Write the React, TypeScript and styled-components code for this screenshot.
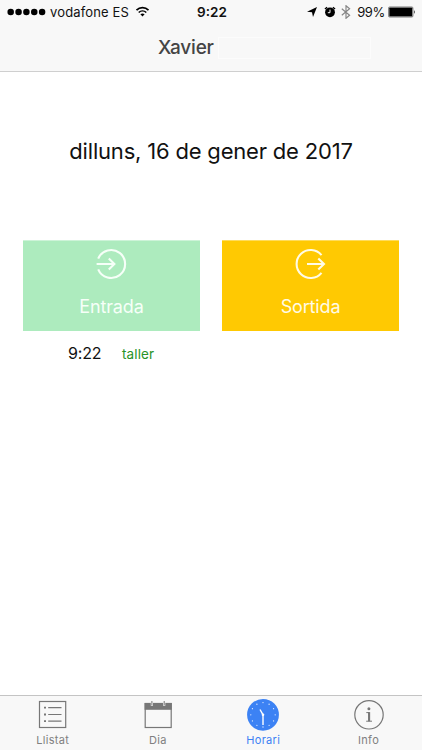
import React from "react";
import styled, { createGlobalStyle } from "styled-components";

const GlobalStyle = createGlobalStyle`
  * { box-sizing: border-box; }
  body {
    margin: 0;
    background: #fff;
    color: #111;
    font-family: Inter, "Liberation Sans", sans-serif;
  }
  svg { display: block; flex: none; }
`;

const Screen = styled.div`
  display: flex;
  flex-direction: column;
  width: 422px;
  height: 750px;
  overflow: hidden;
  white-space: nowrap;
`;

const Header = styled.header`
  height: 72px;
  flex: none;
  background: #f8f8f8;
  border-bottom: 1px solid #cfcfcf;
`;

const StatusBar = styled.div`
  display: grid;
  grid-template-columns: 1fr auto 1fr;
  align-items: center;
  height: 24px;
  padding: 0 6px 0 7px;
  font-size: 13px;
  line-height: 24px;
`;

const StatusGroup = styled.div<{ $end?: boolean }>`
  display: flex;
  align-items: center;
  justify-content: ${(p) => (p.$end ? "flex-end" : "flex-start")};
`;

const Carrier = styled.span`
  margin: 0 6px 0 4px;
  letter-spacing: 0.15px;
`;

const Clock = styled.span`
  padding-left: 1px;
  font-weight: 600;
  font-size: 13.5px;
`;

const Percent = styled.span`
  margin: 0 3px 0 6px;
  letter-spacing: -0.35px;
`;

const IconSlot = styled.span<{ $gap: number }>`
  margin-left: ${(p) => p.$gap}px;
`;

const TitleRow = styled.div`
  display: flex;
  align-items: center;
  height: 47px;
  padding-left: 158px;
`;

const Title = styled.h1`
  margin: 0;
  width: 60px;
  font-size: 19px;
  font-weight: 500;
  line-height: 47px;
  letter-spacing: -0.2px;
  color: #444;
`;

const NameField = styled.div`
  width: 153px;
  height: 22px;
  border: 1px solid #fcfcfc;
`;

const Content = styled.main`
  flex: 1;
  display: flex;
  flex-direction: column;
`;

const DateHeading = styled.h2`
  margin: 64px 0 0;
  height: 30px;
  font-size: 22px;
  font-weight: 400;
  line-height: 30px;
  letter-spacing: -0.19px;
  text-align: center;
`;

const Actions = styled.div`
  display: grid;
  grid-template-columns: 1fr 1fr;
  gap: 22px;
  margin: 74px 23px 0;
`;

const ActionButton = styled.button<{ $bg: string; $edge: string; $fg: string }>`
  display: flex;
  flex-direction: column;
  align-items: center;
  height: 91px;
  padding: 7px 0 0;
  border: 0;
  border-top: 1px solid ${(p) => p.$edge};
  background: ${(p) => p.$bg};
  color: ${(p) => p.$fg};
  font: 400 18px/24px Inter, sans-serif;
  letter-spacing: -0.15px;
`;

const ActionLabel = styled.span`
  margin-top: 15px;
`;

const Entry = styled.div`
  display: flex;
  align-items: baseline;
  margin: 11px 0 0 68px;
  line-height: 22px;
`;

const EntryTime = styled.span`
  width: 54px;
  font-size: 16px;
  letter-spacing: -0.2px;
`;

const EntryPlace = styled.span`
  font-size: 13.5px;
  letter-spacing: 0.1px;
  color: #279327;
`;

const TabBar = styled.nav`
  display: grid;
  grid-template-columns: repeat(4, 105.3px);
  flex: none;
  height: 55px;
  border-top: 1px solid #c4c4c4;
  background: #f8f8f8;
`;

const Tab = styled.div<{ $active?: boolean }>`
  display: flex;
  flex-direction: column;
  align-items: center;
  padding-top: 2px;
  font-size: 11px;
  line-height: 14px;
  letter-spacing: 0.3px;
  color: ${(p) => (p.$active ? "#3c82f4" : "#808080")};
`;

const TabLabel = styled.span`
  margin-top: 1px;
`;

const SignalDots = () => (
  <svg width="39" height="12" viewBox="0 0 39 12">
    {[0, 1, 2, 3, 4].map((n) => (
      <circle key={n} cx={3.7 + n * 7.85} cy="6" r="3.25" />
    ))}
  </svg>
);

const Wifi = () => (
  <svg width="15" height="12" viewBox="0 0 14 12" fill="none" stroke="#000">
    <path d="M1 4.2C4.4.8 9.6.8 13 4.2" strokeWidth="1.7" />
    <path d="M3.2 6.5C5.4 4.5 8.6 4.5 10.8 6.5" strokeWidth="1.6" />
    <path d="M4.9 8.3C6.2 7.2 7.8 7.2 9.1 8.3L7 10.5z" fill="#000" stroke="none" />
  </svg>
);

const Location = () => (
  <svg width="10" height="10" viewBox="0 0 10 10">
    <path d="M10 0L6 10L5 5.3L0 4.7z" />
  </svg>
);

const Alarm = () => (
  <svg width="12" height="12" viewBox="0 0 12 12">
    <circle cx="6" cy="6.3" r="4.9" />
    <path d="M.9 3L3.1 1.2M11.1 3L8.9 1.2" stroke="#000" strokeWidth="1.3" />
    <path d="M6 3.6V6.7H3.8" fill="none" stroke="#f8f8f8" strokeWidth="1" />
  </svg>
);

const Bluetooth = () => (
  <svg width="10" height="14" viewBox="0 0 10 14" fill="none" stroke="#858585" strokeWidth="1.15">
    <path d="M.8 3.7L8.6 10.2L5 13.3V.7L8.6 3.8L.8 10.3" />
  </svg>
);

const Battery = () => (
  <svg width="28" height="12" viewBox="0 0 28 12">
    <rect x=".5" y=".9" width="24.5" height="10.2" rx="1.2" fill="#aaa" stroke="#777" strokeWidth=".8" />
    <rect x="1.4" y="1.8" width="22.7" height="8.4" rx=".5" />
    <path d="M26 4.1Q27.5 6 26 7.9z" />
  </svg>
);

const EnterIcon = () => (
  <svg width="36" height="32" viewBox="0 0 36 32" fill="none" stroke="currentColor" strokeWidth="2.1">
    <path d="M4.2 10.6A14 14 0 1 1 4.2 21.4" />
    <path d="M2.6 16H20.2M14.8 10.4L20.4 16L14.8 21.6" />
  </svg>
);

const ExitIcon = () => (
  <svg width="36" height="32" viewBox="0 0 36 32" fill="none" stroke="currentColor" strokeWidth="2.1">
    <path d="M28.5 7.2A14 14 0 1 0 28.5 24.8" />
    <path d="M14 16H31M25.3 10.4L31 16L25.3 21.6" />
  </svg>
);

const ListIcon = () => (
  <svg width="32" height="34" viewBox="0 0 32 34" fill="none" stroke="#777">
    <rect x="2.5" y="3.5" width="26.2" height="26" strokeWidth="1.2" />
    <path d="M11.2 9.7H24.5M11.2 16.5H24.5M11.2 23.2H24.5" strokeWidth="1.2" />
    <path d="M7 9.7h2M7 16.5h2M7 23.2h2" strokeWidth="1.8" />
  </svg>
);

const CalendarIcon = () => (
  <svg width="32" height="34" viewBox="0 0 32 34" fill="none" stroke="#777">
    <rect x="3.2" y="5.5" width="26" height="24" strokeWidth="1.2" />
    <path d="M2.6 5H29.8V11.8H2.6z" fill="#777" stroke="none" />
    <path d="M9.9 4.5V7.8M22.2 4.5V7.8" stroke="#f8f8f8" strokeWidth="2.2" />
    <path d="M9.9 3V7.2M22.2 3V7.2" strokeWidth="1" />
  </svg>
);

const ClockIcon = () => (
  <svg width="32" height="34" viewBox="0 0 32 34">
    <circle cx="16" cy="16.8" r="15.9" fill="#3c82f4" />
    {Array.from({ length: 12 }, (_, n) => (
      <circle
        key={n}
        cx={16 + 12.2 * Math.sin((n * Math.PI) / 6)}
        cy={16.8 - 12.2 * Math.cos((n * Math.PI) / 6)}
        r=".65"
        fill="#e3edff"
      />
    ))}
    <path d="M13 11.5L16 16.8V27" fill="none" stroke="#fff" strokeWidth="1.4" />
    <circle cx="16" cy="16.8" r="1.3" fill="#fff" />
  </svg>
);

const InfoIcon = () => (
  <svg width="32" height="34" viewBox="0 0 32 34" fill="none" stroke="#777">
    <circle cx="16" cy="16.8" r="14.2" strokeWidth="1.2" />
    <circle cx="15.9" cy="10.8" r="1.5" fill="#777" stroke="none" />
    <path d="M13.3 14.6H16V23" strokeWidth="1" />
    <path d="M16.1 14.1V23.3" strokeWidth="2.1" />
    <path d="M13.2 23.2H19" strokeWidth="1" />
  </svg>
);

const tabs = [
  { label: "Llistat", Icon: ListIcon },
  { label: "Dia", Icon: CalendarIcon },
  { label: "Horari", Icon: ClockIcon, active: true },
  { label: "Info", Icon: InfoIcon },
];

export default function App() {
  return (
    <Screen>
      <GlobalStyle />
      <Header>
        <StatusBar>
          <StatusGroup>
            <SignalDots />
            <Carrier>vodafone ES</Carrier>
            <Wifi />
          </StatusGroup>
          <Clock>9:22</Clock>
          <StatusGroup $end>
            <Location />
            <IconSlot $gap={7}><Alarm /></IconSlot>
            <IconSlot $gap={5}><Bluetooth /></IconSlot>
            <Percent>99%</Percent>
            <Battery />
          </StatusGroup>
        </StatusBar>
        <TitleRow>
          <Title>Xavier</Title>
          <NameField />
        </TitleRow>
      </Header>
      <Content>
        <DateHeading>dilluns, 16 de gener de 2017</DateHeading>
        <Actions>
          <ActionButton $bg="#adebbe" $edge="#cdf3d8" $fg="#f6fff8">
            <EnterIcon />
            <ActionLabel>Entrada</ActionLabel>
          </ActionButton>
          <ActionButton $bg="#ffc902" $edge="#ffdc5c" $fg="#fffbe6">
            <ExitIcon />
            <ActionLabel>Sortida</ActionLabel>
          </ActionButton>
        </Actions>
        <Entry>
          <EntryTime>9:22</EntryTime>
          <EntryPlace>taller</EntryPlace>
        </Entry>
      </Content>
      <TabBar>
        {tabs.map(({ label, Icon, active }) => (
          <Tab key={label} $active={active}>
            <Icon />
            <TabLabel>{label}</TabLabel>
          </Tab>
        ))}
      </TabBar>
    </Screen>
  );
}
